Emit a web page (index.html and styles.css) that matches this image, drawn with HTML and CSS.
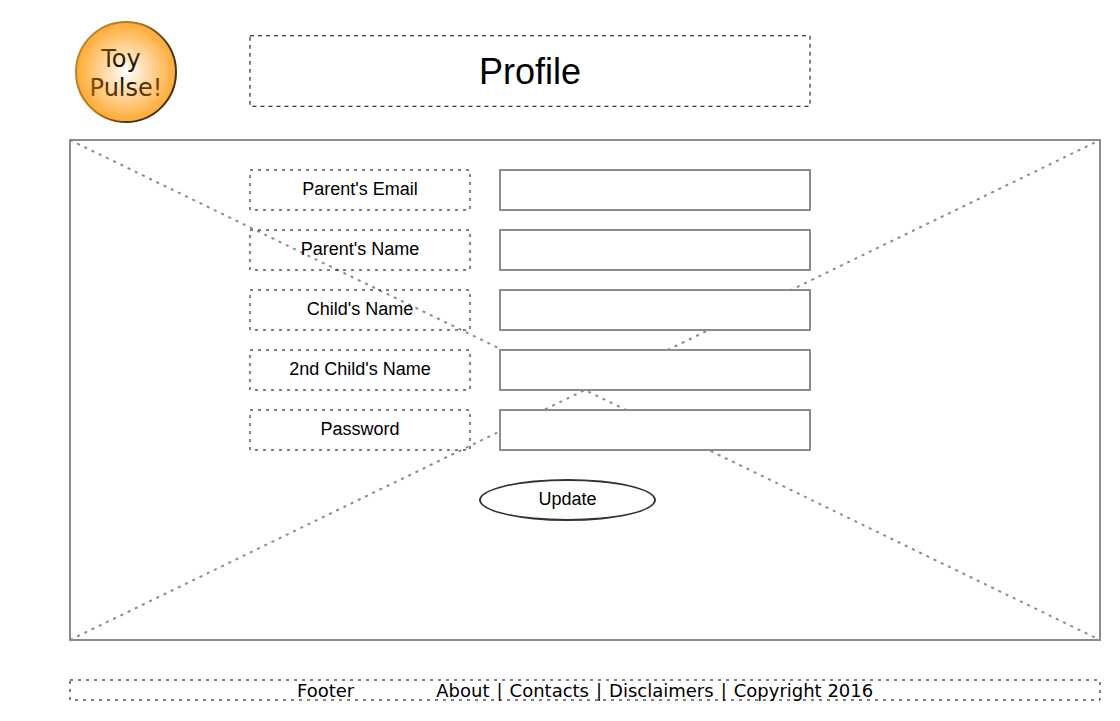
FILE: index.html
```html
<!DOCTYPE html>
<html lang="en">
<head>
<meta charset="utf-8">
<meta name="viewport" content="width=device-width, initial-scale=1">
<title>Toy Pulse! Profile</title>
<link rel="stylesheet" href="styles.css">
</head>
<body>
<div class="page">
  <header class="header">
    <svg class="logo" viewBox="0 0 102 102" role="img" aria-label="Toy Pulse!">
      <defs>
        <radialGradient id="glow">
          <stop offset="0" stop-color="#ffffff"/>
          <stop offset="1" stop-color="#ffaa33"/>
        </radialGradient>
        <linearGradient id="rim" x1="0.1" y1="0.3" x2="0.9" y2="0.7">
          <stop offset="0" stop-color="#c8800f"/>
          <stop offset="0.4" stop-color="#b9770f"/>
          <stop offset="0.8" stop-color="#333333"/>
          <stop offset="1" stop-color="#333333"/>
        </linearGradient>
        <radialGradient id="ink" gradientUnits="userSpaceOnUse" cx="51" cy="51" r="50">
          <stop offset="0" stop-color="#000000"/>
          <stop offset="1" stop-color="#b06a00"/>
        </radialGradient>
      </defs>
      <circle cx="51" cy="51" r="50" fill="url(#glow)" stroke="url(#rim)" stroke-width="2"/>
      <text class="logo-text" x="46" y="46" fill="url(#ink)">Toy</text>
      <text class="logo-text" x="51" y="75" fill="url(#ink)">Pulse!</text>
    </svg>
    <div class="title-box">
      <svg class="outline" aria-hidden="true"><rect class="dash dash-title"/></svg>
      <h1 class="title">Profile</h1>
    </div>
  </header>

  <main class="panel">
    <svg class="cross" viewBox="0 0 1030 500" preserveAspectRatio="none" aria-hidden="true">
      <path d="M0 0L1030 500M0 500L1030 0"/>
    </svg>
    <form class="form">
      <div class="row">
        <label class="label" for="email"><svg class="outline" aria-hidden="true"><rect class="dash"/></svg>Parent's Email</label>
        <input class="field" id="email" type="email">
      </div>
      <div class="row">
        <label class="label" for="parent"><svg class="outline" aria-hidden="true"><rect class="dash"/></svg>Parent's Name</label>
        <input class="field" id="parent" type="text">
      </div>
      <div class="row">
        <label class="label" for="child"><svg class="outline" aria-hidden="true"><rect class="dash"/></svg>Child's Name</label>
        <input class="field" id="child" type="text">
      </div>
      <div class="row">
        <label class="label" for="child2"><svg class="outline" aria-hidden="true"><rect class="dash"/></svg>2nd Child's Name</label>
        <input class="field" id="child2" type="text">
      </div>
      <div class="row">
        <label class="label" for="password"><svg class="outline" aria-hidden="true"><rect class="dash"/></svg>Password</label>
        <input class="field" id="password" type="password">
      </div>
      <button class="update" type="button">Update</button>
    </form>
  </main>

  <footer class="footer">
    <svg class="outline" aria-hidden="true"><rect class="dash"/></svg>
    <span>Footer</span>
    <nav class="links"><a href="#about">About</a><span>|</span><a href="#contacts">Contacts</a><span>|</span><a href="#disclaimers">Disclaimers</a><span>|</span><a href="#copyright">Copyright 2016</a></nav>
  </footer>
</div>
</body>
</html>
```
FILE: styles.css
```css
* {
  box-sizing: border-box;
}

body {
  margin: 0;
  background: #fff;
  color: #000;
  font-family: "Liberation Sans", Arial, sans-serif;
  font-size: 18px;
  line-height: 20px;
}

.page {
  padding: 21px 19px 19px 69px;
}

.header {
  display: flex;
  align-items: flex-start;
  gap: 72px;
  padding-left: 6px;
}

.logo {
  flex: none;
  width: 102px;
  height: 102px;
}

.logo-text {
  font-family: "DejaVu Sans", Verdana, sans-serif;
  font-size: 24px;
  text-anchor: middle;
}

.title-box {
  position: relative;
  flex: 0 1 562px;
  margin-top: 14px;
  padding: 17px 16px 15px;
  text-align: center;
}

.title {
  margin: 0;
  font-size: 36px;
  font-weight: 400;
  line-height: 40px;
}

/* Dashed outlines: 3px dash, 5px gap, running round the box */
.outline {
  position: absolute;
  inset: 0;
  width: 100%;
  height: 100%;
  pointer-events: none;
}

.dash {
  x: 1px;
  y: 1px;
  width: calc(100% - 2px);
  height: calc(100% - 2px);
  fill: none;
  stroke: #000;
  stroke-width: 1px;
  stroke-dasharray: 3 5;
}

.dash-title {
  y: 0.75px;
  height: calc(100% - 1.5px);
  stroke-dasharray: 4 4;
}

.panel {
  position: relative;
  margin-top: 16px;
  padding: 28px 16px 118px 178px;
  border: 2px solid #8c8c8c;
}

.cross {
  position: absolute;
  inset: -1px;
  width: calc(100% + 2px);
  height: calc(100% + 2px);
  fill: none;
  stroke: #8c8c8c;
  stroke-width: 2px;
  stroke-dasharray: 3 5;
}

.form {
  position: relative;
  display: flex;
  flex-direction: column;
  gap: 18px;
  max-width: 562px;
}

.row {
  display: grid;
  grid-template-columns: 222fr 312fr;
  gap: 28px;
}

.label {
  position: relative;
  padding: 10px 0 12px;
  text-align: center;
}

.field {
  width: 100%;
  min-width: 0;
  padding: 0 8px;
  border: 2px solid #8c8c8c;
  border-radius: 0;
  background: #fff;
  font: inherit;
}

.update {
  align-self: flex-start;
  margin: 10px 0 0 230px;
  width: 177px;
  padding: 8px 0 10px;
  border: 2px solid #333;
  border-radius: 50%;
  background: #fff;
  color: #000;
  font: inherit;
}

.footer {
  position: relative;
  display: flex;
  flex-wrap: wrap;
  gap: 0 82px;
  margin-top: 38px;
  padding: 2px 0 0 228px;
  font-family: "DejaVu Sans", Verdana, sans-serif;
}

.links {
  display: flex;
  flex-wrap: wrap;
  gap: 0 7px;
}

.links a {
  color: inherit;
  text-decoration: none;
}
```
